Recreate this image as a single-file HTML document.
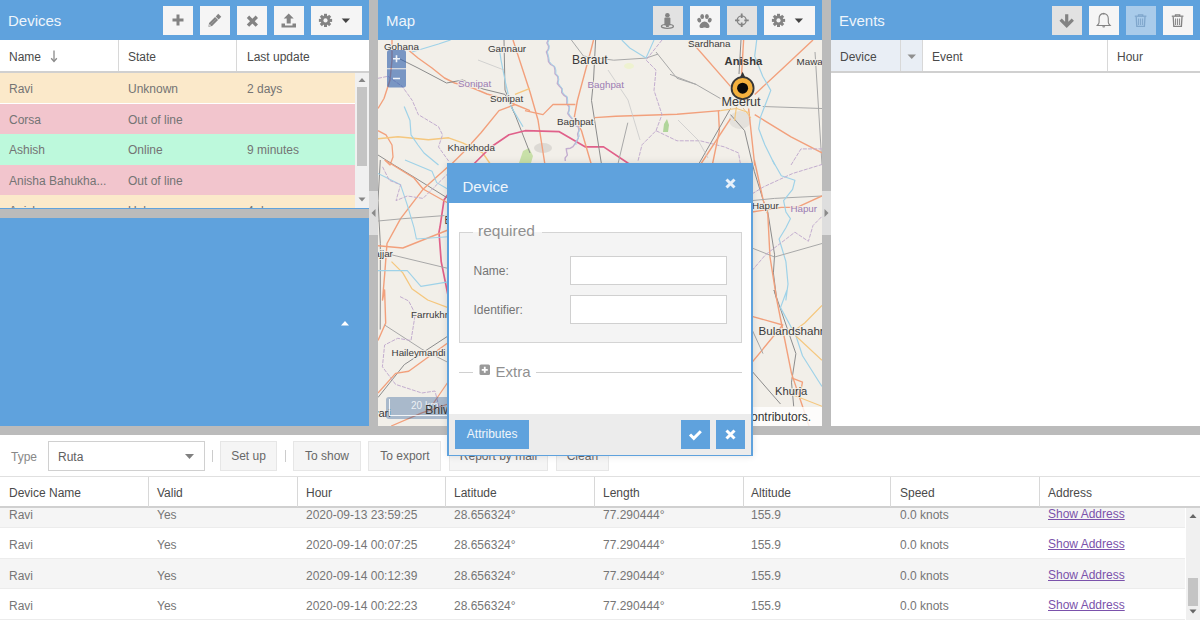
<!DOCTYPE html>
<html><head><meta charset="utf-8">
<style>
*{box-sizing:border-box;margin:0;padding:0}
html,body{width:1200px;height:620px;overflow:hidden;background:#bbbbbb;font-family:"Liberation Sans",sans-serif;}
.a{position:absolute}
.hdr{background:#5fa2dd;color:#eef5fb;font-size:15px}
.btn{position:absolute;top:6px;width:29.6px;height:29px;background:#f5f5f5}
.btn svg{position:absolute;left:0;top:0}
.prs{background:#e2e2e2}
.gh{position:absolute;background:#fff;color:#4a4a4a;font-size:12px}
.gh span{position:absolute;top:10.4px}
.row{position:absolute;left:0;font-size:12px;color:#747474}
.row span{position:absolute}
.vl{position:absolute;width:1px;background:#d8d8d8}
.tb{position:absolute;top:441px;height:29.5px;background:#f5f5f5;border:1px solid #e6e6e6;font-size:12px;color:#686868;text-align:center;line-height:29px}
.br{position:absolute;left:0;width:1186px;font-size:12px;color:#767676}
.br span{position:absolute;top:0}
</style></head><body>

<!-- DEVICES PANEL -->
<div class="a" style="left:0;top:0;width:369px;height:426px;background:#5fa2dd"></div>
<div class="a hdr" style="left:0;top:0;width:369px;height:40px">
  <div class="a" style="left:8px;top:11.7px">Devices</div>
  <div class="btn" style="left:163px"><svg width="30" height="29"><path d="M15 13.5v11M9.5 19h11" stroke="#838383" stroke-width="3" fill="none" transform="translate(0,-5)"/></svg></div>
  <div class="btn" style="left:200px"><svg width="30" height="29"><g transform="translate(14.3,14.8) rotate(-45)" fill="#838383"><path d="M-8.3 0L-5.3-2.1H3.2V2.1H-5.3Z"/><rect x="4.1" y="-2.1" width="3.6" height="4.2"/><path d="M-7.4 0L-5.6-.9V.9Z" fill="#f5f5f5"/><path d="M-4.5 0H3" stroke="#a8a8a8" stroke-width=".6"/></g></svg></div>
  <div class="btn" style="left:237px"><svg width="30" height="29"><path d="M11 10.8l8.8 8.8M19.8 10.8l-8.8 8.8" stroke="#838383" stroke-width="3.4" fill="none"/></svg></div>
  <div class="btn" style="left:274px"><svg width="30" height="29"><path d="M14.7 7.5l-5 5h3v5h4v-5h3z M7.5 17.5h3.5v2h7.5v-2h3.5v4h-14.5z" fill="#838383"/></svg></div>
  <div class="btn" style="left:311px;width:50.5px"><svg width="51" height="29"><g transform="translate(14.5,14.4)" fill="#838383"><circle r="4.8"/><rect x="-1.5" y="-6.6" width="3" height="13.2"/><rect x="-1.5" y="-6.6" width="3" height="13.2" transform="rotate(45)"/><rect x="-1.5" y="-6.6" width="3" height="13.2" transform="rotate(90)"/><rect x="-1.5" y="-6.6" width="3" height="13.2" transform="rotate(135)"/><circle r="2.1" fill="#f5f5f5"/></g><path d="M30.7 12.4h8.3l-4.15 4.6z" fill="#444"/></svg></div>
</div>
<div class="gh" style="left:0;top:40px;width:369px;height:33px;border-bottom:2px solid #d0d0d0">
  <span style="left:9px">Name</span><svg class="a" style="left:49px;top:9px" width="10" height="14"><path d="M5 1.5v10.5" stroke="#8a8a8a" stroke-width="1.3"/><path d="M2.2 9.3L5 12.5 7.8 9.3" stroke="#8a8a8a" stroke-width="1.3" fill="none"/></svg>
  <span style="left:128px">State</span>
  <span style="left:247px">Last update</span>
</div>
<div class="vl" style="left:118px;top:40px;height:31px"></div>
<div class="vl" style="left:236px;top:40px;height:31px"></div>
<div class="a" style="left:0;top:73px;width:355px;height:135px;overflow:hidden;background:#fff">
  <div class="row" style="top:0;width:355px;height:30px;background:#fbe9ca"><span style="left:9px;top:9.4px">Ravi</span><span style="left:128px;top:9.4px">Unknown</span><span style="left:247px;top:9.4px">2 days</span></div>
  <div class="row" style="top:31px;width:355px;height:30px;background:#f2c5cd"><span style="left:9px;top:9.4px">Corsa</span><span style="left:128px;top:9.4px">Out of line</span></div>
  <div class="row" style="top:61px;width:355px;height:31px;background:#bdf9dc"><span style="left:9px;top:9.4px">Ashish</span><span style="left:128px;top:9.4px">Online</span><span style="left:247px;top:9.4px">9 minutes</span></div>
  <div class="row" style="top:92px;width:355px;height:30px;background:#f2c5cd"><span style="left:9px;top:9.4px">Anisha Bahukha...</span><span style="left:128px;top:9.4px">Out of line</span></div>
  <div class="row" style="top:122px;width:355px;height:30px;background:#fbe9ca"><span style="left:9px;top:9.4px">Anish</span><span style="left:128px;top:9.4px">Unknown</span><span style="left:247px;top:9.4px">4 days</span></div>
</div>
<div class="a" style="left:355px;top:73px;width:14px;height:135px;background:#f0f0f0"></div>
<div class="a" style="left:357px;top:87px;width:10px;height:79px;background:#c4c4c4"></div>
<svg class="a" style="left:355px;top:73px" width="14" height="135"><path d="M3.5 9h7l-3.5-4z M3.5 124.5h7l-3.5 4z" fill="#858585"/></svg>
<div class="a" style="left:0;top:208.5px;width:369px;height:9px;background:#bbbbbb"></div>
<svg class="a" style="left:338px;top:318px" width="14" height="10"><path d="M3 7.5h8l-4-4.5z" fill="#fff"/></svg>

<!-- splitters tools -->
<div class="a" style="left:369px;top:191px;width:9px;height:44px;background:#dedede"></div>
<div class="a" style="left:822px;top:191px;width:9px;height:44px;background:#dedede"></div>
<svg class="a" style="left:369px;top:205px" width="9" height="16"><path d="M6.5 4v8l-4-4z" fill="#8a8a8a"/></svg>
<svg class="a" style="left:822px;top:205px" width="9" height="16"><path d="M2.5 4v8l4-4z" fill="#8a8a8a"/></svg>

<!-- MAP PANEL -->
<div class="a" id="map" style="left:378px;top:40px;width:444px;height:386px;background:#f2efe9;overflow:hidden"><svg width="444" height="386" style="position:absolute;left:0;top:0"><ellipse cx="362" cy="80" rx="11" ry="9" fill="#e4e1dc"/>
<ellipse cx="165" cy="108" rx="9" ry="5" fill="#dcd9d4"/>
<path d="M141 123l4-12 6-3 4 8-2 7z" fill="#c8e0a8"/>
<path d="M285 92l1-8 3-5 2 6-1 7z" fill="#b0d59a"/>
<ellipse cx="251" cy="26" rx="5" ry="3" fill="#eef2d0"/>
<path d="M28 8 L40 18 L54 28 L66.5 38 L76.6 43 L94.8 48 L109 54 L125 58.5 L137 64.5 L152 70.6" stroke="#f2a07c" stroke-width="1.4" fill="none" stroke-linejoin="round"/>
<path d="M20 18 L40 28 L68.5 43 L84.7 40 L105 49 L127 54.4 L137 74.6 L152 113" stroke="#8c8c8c" stroke-width="1.0" fill="none" stroke-linejoin="round"/>
<path d="M126 0 L127 50 L137 74.6" stroke="#8c8c8c" stroke-width="1.0" fill="none" stroke-linejoin="round"/>
<path d="M135 0 L152 52 L160 80 L167 125" stroke="#f2a07c" stroke-width="1.4" fill="none" stroke-linejoin="round"/>
<path d="M137 64.5 L121 70.6 L103 92.7 L84.7 113 L72.6 125" stroke="#f2a07c" stroke-width="1.4" fill="none" stroke-linejoin="round"/>
<path d="M14 0 L14 20 L12 40 L6 58.5 L0 68.5" stroke="#f2a07c" stroke-width="1.4" fill="none" stroke-linejoin="round"/>
<path d="M0 90.7 L8 94.8 L14 105 L15 117 L12 125 L6.8 120" stroke="#f2a07c" stroke-width="1.3" fill="none" stroke-linejoin="round"/>
<path d="M0 98.8 L20 96.8 L50.4 99.8 L70.6 97.8 L84.7 102.8 L104.8 113 L113 125" stroke="#f5c77e" stroke-width="1.4" fill="none" stroke-linejoin="round"/>
<path d="M137 54.4 L152 48.4" stroke="#f5c77e" stroke-width="1.2" fill="none" stroke-linejoin="round"/>
<path d="M70 255.4 L63.2 221.6 L61 192.2 L62 187 L66 160 L80 140 L96.8 123 L113 107 L131 94.8 L147 90.7 L181.3 91.7 L207.5 106.9 L225.6 106.9 L249.8 123 L262 130" stroke="#e0608a" stroke-width="1.7" fill="none" stroke-linejoin="round"/>
<path d="M26.2 66.5 L32 80.6 L33 94.8 L40 105 L46 113 L60.5 125" stroke="#9fd2e8" stroke-width="1.2" fill="none" stroke-linejoin="round"/>
<path d="M121 6 L123 20 L128 45 L133 66.5 L145 86.7" stroke="#9fd2e8" stroke-width="1.2" fill="none" stroke-linejoin="round"/>
<path d="M34 12 L60.5 4 L72.6 0" stroke="#9fd2e8" stroke-width="1.2" fill="none" stroke-linejoin="round"/>
<path d="M0 38.3 L10 36.3 L24.2 46.4 L34.3 60.5 L40.3 74.6 L60.5 86.7 L64.5 94.8 L60.5 106.9 L70.6 121" stroke="#c3adcf" stroke-width="1.0" stroke-dasharray="4 1.2" fill="none" stroke-linejoin="round"/>
<path d="M0 115 L16 125 L33.9 135.8 L70 158.4" stroke="#8c8c8c" stroke-width="1.0" fill="none" stroke-linejoin="round"/>
<path d="M170.2 0.0 L168.9 3.0 L170.6 6.1 L170.4 9.1 L168.4 12.0 L169.5 15.1 L170.1 17.5 L170.5 21.6 L172.7 24.5 L176.2 26.5 L177.0 30.2 L177.0 33.7 L179.7 36.5 L180.1 39.8 L179.3 43.5 L181.5 46.3 L183.8 48.7 L183.7 52.5 L185.7 55.1 L188.7 57.1 L188.9 60.5 L188.8 63.8 L191.1 66.8 L190.9 70.1 L189.8 73.5 L191.8 76.3 L194.1 78.9 L194.6 82.8 L197.2 85.2 L200.4 87.2 L200.9 90.6 L199.6 94.0 L200.4 98.0 L198.6 101.3 L196.9 103.8 L195.0 106.7 L192.4 108.2 L188.2 108.7 L188.7 111.9 L189.4 115.1 L187.1 117.9 L187.3 121" stroke="#c3adcf" stroke-width="1.4" fill="none" stroke-linejoin="round"/>
<path d="M171.0 0.0 L169.9 2.9 L171.3 6.0 L171.0 9.0 L169.4 11.9 L170.2 15.0 L170.8 17.5 L171.4 21.4 L173.6 24.3 L176.8 26.5 L177.9 30.0 L177.9 33.4 L180.3 36.2 L180.8 39.5 L180.2 43.0 L182.2 45.9 L184.3 48.4 L184.5 52.0 L186.5 54.6 L189.3 56.7 L189.7 60.0 L189.6 63.3 L191.6 66.3 L191.5 69.6 L190.6 72.9 L192.3 75.8 L194.6 78.4 L195.3 82.1 L197.8 84.5 L200.8 86.6 L201.6 89.9 L200.5 92.8 L201.3 96.2 L199.7 99.0 L197.9 101.7 L198 105" stroke="#9fd2e8" stroke-width="0.9" fill="none" stroke-linejoin="round"/>
<path d="M215.5 0 L213.5 8 L207.5 30.2 L199.4 60.5 L196.4 76.6 L203.5 90.7 L213.5 125" stroke="#f2a07c" stroke-width="1.4" fill="none" stroke-linejoin="round"/>
<path d="M217.6 0 L215.5 40.3 L213.5 60.5 L223.6 125" stroke="#8c8c8c" stroke-width="1.0" fill="none" stroke-linejoin="round"/>
<path d="M216.6 77.6 L237.7 76.2 L299 74.2 L342.4 70.6" stroke="#f2a07c" stroke-width="1.4" fill="none" stroke-linejoin="round"/>
<path d="M147 70.6 L165 74.6 L175 64.5 L197.4 64.5" stroke="#f2a07c" stroke-width="1.3" fill="none" stroke-linejoin="round"/>
<path d="M193.4 0 L205.5 16.1 L235.7 20.2 L268 18.1 L280 14.1" stroke="#a8a8a8" stroke-width="1.0" fill="none" stroke-linejoin="round"/>
<path d="M243.8 0 L251.8 8 L268 18 L276 0" stroke="#9fd2e8" stroke-width="1.1" fill="none" stroke-linejoin="round"/>
<path d="M284 0 L268 20 L278 30 L276 50.4 L284 74.6 L278 90.7 L264 104.8 L260 121" stroke="#c3adcf" stroke-width="1.0" stroke-dasharray="4 1.2" fill="none" stroke-linejoin="round"/>
<path d="M278 90.7 L299 100.8 L322.2 100.8 L346.4 106.9 L360.5 112.9 L362.6 125" stroke="#c3adcf" stroke-width="1.0" stroke-dasharray="4 1.2" fill="none" stroke-linejoin="round"/>
<path d="M278 12 L299 38.3 L318 44.4 L342.4 58.5" stroke="#a8a8a8" stroke-width="1.0" fill="none" stroke-linejoin="round"/>
<path d="M249.8 82.7 L239.7 125" stroke="#a8a8a8" stroke-width="1.0" fill="none" stroke-linejoin="round"/>
<path d="M292 34.3 L318 44.4" stroke="#a8a8a8" stroke-width="1.0" fill="none" stroke-linejoin="round"/>
<path d="M312 0 L352.5 46.4" stroke="#f2a07c" stroke-width="1.4" fill="none" stroke-linejoin="round"/>
<path d="M365.6 0 L363.6 34.3" stroke="#f2a07c" stroke-width="1.4" fill="none" stroke-linejoin="round"/>
<path d="M363 0 L361 34" stroke="#8c8c8c" stroke-width="1.0" fill="none" stroke-linejoin="round"/>
<path d="M435 0 L403 30 L376.7 54.4" stroke="#f2a07c" stroke-width="1.4" fill="none" stroke-linejoin="round"/>
<path d="M384.7 66.5 L444 68.5" stroke="#a8a8a8" stroke-width="1.0" fill="none" stroke-linejoin="round"/>
<path d="M437 12 L440 60 L444 125" stroke="#a8a8a8" stroke-width="1.0" fill="none" stroke-linejoin="round"/>
<path d="M340.4 70.6 L341.4 90.7 L334.3 125" stroke="#f2a07c" stroke-width="1.4" fill="none" stroke-linejoin="round"/>
<path d="M352.5 78.6 L322.2 125" stroke="#f2a07c" stroke-width="1.4" fill="none" stroke-linejoin="round"/>
<path d="M352.5 68.5 L320.2 125" stroke="#8c8c8c" stroke-width="1.0" fill="none" stroke-linejoin="round"/>
<path d="M352.5 74.6 L366.6 90.7 L374.7 125 L376.3 131.3 L385.3 160.6 L389.8 172 L396.6 214.8 L395.4 232.9 L398.8 260 L396 250 L417.9 313.6 L413.5 342.2 L415.7 366.3" stroke="#8c8c8c" stroke-width="1.0" fill="none" stroke-linejoin="round"/>
<path d="M370.6 68.5 L376.7 125 L376.3 120 L385.3 160.6 L389.8 174.2 L392 217 L398.8 260 L404.7 289.5 L413.5 333.4 L424.5 366.3 L431 386" stroke="#f2a07c" stroke-width="1.4" fill="none" stroke-linejoin="round"/>
<path d="M376.7 74.6 L413 96.8 L444 112.9" stroke="#f2a07c" stroke-width="1.4" fill="none" stroke-linejoin="round"/>
<path d="M378.7 0 L376.7 16.1 L384.7 36.3 L392.8 50.4 L382.7 76.6 L380.7 88.7 L386.8 104.8 L396.8 125" stroke="#9fd2e8" stroke-width="1.2" fill="none" stroke-linejoin="round"/>
<path d="M413 125 L423 108.9 L444 108.9" stroke="#c3adcf" stroke-width="1.0" stroke-dasharray="4 1.2" fill="none" stroke-linejoin="round"/>
<path d="M342.4 70.6 L358.5 68.5 L372 73" stroke="#f5c77e" stroke-width="1.2" fill="none" stroke-linejoin="round"/>
<path d="M358.5 66.5 L356.5 80.6" stroke="#f5c77e" stroke-width="1.2" fill="none" stroke-linejoin="round"/>
<path d="M365 68 L373 78" stroke="#f5c77e" stroke-width="1.0" fill="none" stroke-linejoin="round"/>
<path d="M230 30 L250 60 L262 100" stroke="#c9c9c9" stroke-width="0.8" fill="none" stroke-linejoin="round"/>
<path d="M100 20 L126 30" stroke="#c9c9c9" stroke-width="0.8" fill="none" stroke-linejoin="round"/>
<path d="M300 80 L320 100 L330 118" stroke="#c9c9c9" stroke-width="0.8" fill="none" stroke-linejoin="round"/>
<path d="M6.8 120 L36 138 L45 149 L70 163" stroke="#f2a07c" stroke-width="1.4" fill="none" stroke-linejoin="round"/>
<path d="M70 126.8 L45 149.3 L22.6 178.7 L9 203.5 L6.8 232.9 L4.5 260 L6.6 250 L7.7 283 L0 300.5" stroke="#f2a07c" stroke-width="1.4" fill="none" stroke-linejoin="round"/>
<path d="M2.3 120 L0 160.6 L2.3 203.5 L2.3 260 L2.2 289.5" stroke="#8c8c8c" stroke-width="1.0" fill="none" stroke-linejoin="round"/>
<path d="M0 181 L24.8 178.7 L70 175.3" stroke="#a8a8a8" stroke-width="1.0" fill="none" stroke-linejoin="round"/>
<path d="M13.5 214.8 L70 228.4" stroke="#a8a8a8" stroke-width="1.0" fill="none" stroke-linejoin="round"/>
<path d="M0 205.8 L24.8 208 L70 190" stroke="#f2a07c" stroke-width="1.4" fill="none" stroke-linejoin="round"/>
<path d="M13.5 221.6 L24.8 232.9 L33.9 248.7 L49.7 260 L70 267.6" stroke="#f5c77e" stroke-width="1.3" fill="none" stroke-linejoin="round"/>
<path d="M0 133.5 L22.6 144.8 L29.3 165 L36 187.7 L38.4 199 L70 196.7" stroke="#9fd2e8" stroke-width="1.1" fill="none" stroke-linejoin="round"/>
<path d="M0 230.6 L29.3 230.6 L42.9 246.4 L70 241.9" stroke="#9fd2e8" stroke-width="1.1" fill="none" stroke-linejoin="round"/>
<path d="M27 120 L54 131.3 L58.7 142.6 L70 149.3" stroke="#9fd2e8" stroke-width="1.1" fill="none" stroke-linejoin="round"/>
<path d="M4.5 126.8 L11.3 140.3 L22.6 144.8 L18 160.6 L29.3 156 L45 158.4 L70 133.5" stroke="#c3adcf" stroke-width="1.0" stroke-dasharray="4 1.2" fill="none" stroke-linejoin="round"/>
<path d="M0 357.5 L26.3 324.6 L70 296" stroke="#8c8c8c" stroke-width="1.0" fill="none" stroke-linejoin="round"/>
<path d="M0 353 L17.6 333.4 L30.7 331.2 L70 302.7" stroke="#f2a07c" stroke-width="1.4" fill="none" stroke-linejoin="round"/>
<path d="M6.6 285 L43.9 309.2 L70 322.4" stroke="#a8a8a8" stroke-width="1.0" fill="none" stroke-linejoin="round"/>
<path d="M13.2 386 L43.9 372.9 L70 364" stroke="#f2a07c" stroke-width="1.3" fill="none" stroke-linejoin="round"/>
<path d="M70 342 L54.9 364" stroke="#f2a07c" stroke-width="1.3" fill="none" stroke-linejoin="round"/>
<path d="M22 256.6 L30.7 261 L37.3 274 L33 300.5 L19.7 298.3 L6.6 305 L4.4 326.8 L17.6 344.4 L43.9 353 L57 351 L61.4 368.5" stroke="#c3adcf" stroke-width="1.0" stroke-dasharray="4 1.2" fill="none" stroke-linejoin="round"/>
<path d="M374 160.6 L396.6 158.4 L444 156" stroke="#a8a8a8" stroke-width="1.0" fill="none" stroke-linejoin="round"/>
<path d="M374 172 L403.3 167.4 L419 167.4 L444 156" stroke="#f2a07c" stroke-width="1.4" fill="none" stroke-linejoin="round"/>
<path d="M394.3 120 L403.3 135.8 L416.9 140.3 L414.6 149.3 L405.6 160.6 L407.9 172 L412.4 178.7 L407.9 187.7 L401.1 199 L407.9 221.6 L410 244 L407.9 260 L409 250 L402.5 267.6 L418 296 L424.5 315.8 L439.8 340 L444 346.5" stroke="#9fd2e8" stroke-width="1.2" fill="none" stroke-linejoin="round"/>
<path d="M374 208 L396.6 217 L444 203.5" stroke="#a8a8a8" stroke-width="1.0" fill="none" stroke-linejoin="round"/>
<path d="M374 153.9 L385.3 147 L414.6 133.5 L444 124.5" stroke="#c3adcf" stroke-width="1.0" stroke-dasharray="4 1.2" fill="none" stroke-linejoin="round"/>
<path d="M374 230.6 L387.5 214.8 L416.9 192.2 L430.4 201.3 L435 185.5 L444 176.4" stroke="#c3adcf" stroke-width="1.0" stroke-dasharray="4 1.2" fill="none" stroke-linejoin="round"/>
<path d="M374 276.3 L404.7 285 L374 322.4" stroke="#f2a07c" stroke-width="1.4" fill="none" stroke-linejoin="round"/>
<path d="M413.5 337.8 L424.5 342.2 L422.3 353" stroke="#f2a07c" stroke-width="1.3" fill="none" stroke-linejoin="round"/>
<path d="M444 265.4 L426.7 283 L417.9 289.5" stroke="#f5c77e" stroke-width="1.2" fill="none" stroke-linejoin="round"/>
<path d="M417.9 296 L444 320.2" stroke="#f5c77e" stroke-width="1.2" fill="none" stroke-linejoin="round"/>
<path d="M415.7 355.3 L444 366.3" stroke="#f5c77e" stroke-width="1.2" fill="none" stroke-linejoin="round"/>
<path d="M374 331.2 L402.5 364" stroke="#8c8c8c" stroke-width="1.0" fill="none" stroke-linejoin="round"/>
<path d="M374 289.5 L385 313.6" stroke="#a8a8a8" stroke-width="1.0" fill="none" stroke-linejoin="round"/>
<text x="6" y="10.0" font-size="9.8" fill="#3a3a3a" stroke="#f2efe9" stroke-width="2.2" stroke-opacity=".85" paint-order="stroke" font-family="Liberation Sans">Gohana</text>
<text x="110" y="12.0" font-size="9.8" fill="#3a3a3a" stroke="#f2efe9" stroke-width="2.2" stroke-opacity=".85" paint-order="stroke" font-family="Liberation Sans">Gannaur</text>
<text x="80" y="47.0" font-size="9.8" fill="#9b7bb3" stroke="#f2efe9" stroke-width="2.2" stroke-opacity=".85" paint-order="stroke" font-family="Liberation Sans">Sonipat</text>
<text x="112" y="62.0" font-size="9.8" fill="#3a3a3a" stroke="#f2efe9" stroke-width="2.2" stroke-opacity=".85" paint-order="stroke" font-family="Liberation Sans">Sonipat</text>
<text x="69.5" y="110.5" font-size="9.8" fill="#3a3a3a" stroke="#f2efe9" stroke-width="2.2" stroke-opacity=".85" paint-order="stroke" font-family="Liberation Sans">Kharkhoda</text>
<text x="194" y="24.0" font-size="12.1" fill="#3a3a3a" stroke="#f2efe9" stroke-width="2.2" stroke-opacity=".85" paint-order="stroke" font-family="Liberation Sans">Baraut</text>
<text x="209.5" y="48.3" font-size="9.8" fill="#9b7bb3" stroke="#f2efe9" stroke-width="2.2" stroke-opacity=".85" paint-order="stroke" font-family="Liberation Sans">Baghpat</text>
<text x="179" y="85.2" font-size="9.8" fill="#3a3a3a" stroke="#f2efe9" stroke-width="2.2" stroke-opacity=".85" paint-order="stroke" font-family="Liberation Sans">Baghpat</text>
<text x="310" y="7.1" font-size="9.8" fill="#3a3a3a" stroke="#f2efe9" stroke-width="2.2" stroke-opacity=".85" paint-order="stroke" font-family="Liberation Sans">Sardhana</text>
<text x="418.6" y="24.7" font-size="9.8" fill="#3a3a3a" stroke="#f2efe9" stroke-width="2.2" stroke-opacity=".85" paint-order="stroke" font-family="Liberation Sans">Mawa</text>
<text x="343.4" y="66.0" font-size="12.6" fill="#3a3a3a" stroke="#f2efe9" stroke-width="2.2" stroke-opacity=".85" paint-order="stroke" font-family="Liberation Sans">Meerut</text>
<text x="292" y="129.5" font-size="9.8" fill="#3a3a3a" stroke="#f2efe9" stroke-width="2.2" stroke-opacity=".85" paint-order="stroke" font-family="Liberation Sans">Modinagar</text>
<text x="-14" y="217.2" font-size="9.8" fill="#3a3a3a" stroke="#f2efe9" stroke-width="2.2" stroke-opacity=".85" paint-order="stroke" font-family="Liberation Sans">Jhajjar</text>
<text x="66.6" y="183.5" font-size="10.2" fill="#3a3a3a" stroke="#f2efe9" stroke-width="2.2" stroke-opacity=".85" paint-order="stroke" font-family="Liberation Sans">B</text>
<text x="33" y="277.5" font-size="9.8" fill="#3a3a3a" stroke="#f2efe9" stroke-width="2.2" stroke-opacity=".85" paint-order="stroke" font-family="Liberation Sans">Farrukhnagar</text>
<text x="13.6" y="316.0" font-size="9.8" fill="#3a3a3a" stroke="#f2efe9" stroke-width="2.2" stroke-opacity=".85" paint-order="stroke" font-family="Liberation Sans">Haileymandi</text>
<text x="-22" y="377.0" font-size="11.2" fill="#3a3a3a" stroke="#f2efe9" stroke-width="2.2" stroke-opacity=".85" paint-order="stroke" font-family="Liberation Sans">Rewari</text>
<text x="374" y="168.5" font-size="9.8" fill="#3a3a3a" stroke="#f2efe9" stroke-width="2.2" stroke-opacity=".85" paint-order="stroke" font-family="Liberation Sans">Hapur</text>
<text x="412.4" y="172.0" font-size="9.8" fill="#9b7bb3" stroke="#f2efe9" stroke-width="2.2" stroke-opacity=".85" paint-order="stroke" font-family="Liberation Sans">Hapur</text>
<text x="380.6" y="294.8" font-size="11.6" fill="#3a3a3a" stroke="#f2efe9" stroke-width="2.2" stroke-opacity=".85" paint-order="stroke" font-family="Liberation Sans">Bulandshahr</text>
<text x="397" y="355.0" font-size="11.2" fill="#3a3a3a" stroke="#f2efe9" stroke-width="2.2" stroke-opacity=".85" paint-order="stroke" font-family="Liberation Sans">Khurja</text></svg>
<svg class="a" style="left:9px;top:10px" width="19" height="38"><path d="M0 18.2V2.5A2.5 2.5 0 0 1 2.5 0h14A2.5 2.5 0 0 1 19 2.5v15.7z" fill="rgba(40,90,170,.6)"/><path d="M0 19.2h19v15.8a2.5 2.5 0 0 1-2.5 2.5h-14A2.5 2.5 0 0 1 0 35z" fill="rgba(40,90,170,.6)"/><path d="M9.5 5.2v7M6 8.7h7M6 28.5h7" stroke="#fff" stroke-width="1.6" opacity=".9"/></svg>
<div class="a" style="left:7.7px;top:357px;width:66px;height:22px;background:rgba(0,60,136,.3);border-radius:3px"></div><div class="a" style="left:10.5px;top:359px;width:60px;height:17px;border:1px solid rgba(255,255,255,.85);border-top:none;border-right:none"></div><div class="a" style="left:33px;top:360px;font-size:10px;color:rgba(255,255,255,.8)">20 km</div><div class="a" style="left:47px;top:363px;font-size:12.5px;color:#3a3a3a">Bhiwadi</div>
<div class="a" style="left:364px;top:366.8px;width:80px;height:19.2px;background:rgba(255,255,255,.8)"></div>
<div class="a" style="left:367px;top:370px;font-size:12px;color:#333">contributors.</div>

<div class="a" style="left:346.5px;top:15px;font-size:11.2px;font-weight:bold;color:#383838;letter-spacing:.1px">Anisha</div>
<svg class="a" style="left:350px;top:30px" width="30" height="32"><path d="M14.6 1.8l2.6 5.5h-5.2z" fill="#333"/><circle cx="14.6" cy="18.2" r="11" fill="#f4b13e" stroke="#383838" stroke-width="1.8"/><circle cx="14.6" cy="18.2" r="5.5" fill="#0a0a0a"/></svg>
</div>
<div class="a hdr" style="left:378px;top:0;width:444px;height:40px">
  <div class="a" style="left:8px;top:11.7px">Map</div>
  <div class="btn prs" style="left:275px"><svg width="30" height="29"><circle cx="14.4" cy="9.2" r="2.3" fill="#838383"/><rect x="11.4" y="11.6" width="6" height="8" rx="1" fill="#838383"/><ellipse cx="14.4" cy="20.3" rx="6" ry="2" fill="none" stroke="#838383" stroke-width="1.3"/><rect x="13" y="18" width="2.8" height="3" fill="#838383"/></svg></div>
  <div class="btn" style="left:312px"><svg width="30" height="29"><g fill="#838383"><ellipse cx="9.2" cy="14.2" rx="1.9" ry="2.4" transform="rotate(-20 9.2 14.2)"/><ellipse cx="12.2" cy="10.4" rx="1.9" ry="2.5"/><ellipse cx="16.9" cy="10.4" rx="1.9" ry="2.5"/><ellipse cx="19.8" cy="14.2" rx="1.9" ry="2.4" transform="rotate(20 19.8 14.2)"/><path d="M14.5 15.5c-2.5 0-5 3-5 4.8 0 1.5 1.2 1.8 2.2 1.8 1.2 0 1.8-.6 2.8-.6s1.6.6 2.8.6c1 0 2.2-.3 2.2-1.8 0-1.8-2.5-4.8-5-4.8z"/></g></svg></div>
  <div class="btn prs" style="left:349px"><svg width="30" height="29"><g stroke="#838383" fill="none"><circle cx="14.7" cy="14.3" r="4.5" stroke-width="1.3"/><path d="M14.7 7.6v4.4M14.7 16.6v4.4M8 14.3h4.4M17.3 14.3h4.4" stroke-width="1.8"/></g></svg></div>
  <div class="btn" style="left:386px;width:50.5px"><svg width="51" height="29"><g transform="translate(14.5,14.4)" fill="#838383"><circle r="4.8"/><rect x="-1.5" y="-6.6" width="3" height="13.2"/><rect x="-1.5" y="-6.6" width="3" height="13.2" transform="rotate(45)"/><rect x="-1.5" y="-6.6" width="3" height="13.2" transform="rotate(90)"/><rect x="-1.5" y="-6.6" width="3" height="13.2" transform="rotate(135)"/><circle r="2.1" fill="#f5f5f5"/></g><path d="M30.7 12.4h8.3l-4.15 4.6z" fill="#444"/></svg></div>
</div>

<!-- EVENTS PANEL -->
<div class="a hdr" style="left:831px;top:0;width:369px;height:40px">
  <div class="a" style="left:8px;top:11.7px">Events</div>
  <div class="btn prs" style="left:221.3px"><svg width="30" height="29"><path d="M14.7 8.3v10.5M8.6 13.6l6.1 6.1 6.1-6.1" stroke="#838383" stroke-width="3.2" fill="none"/></svg></div>
  <div class="btn" style="left:258.3px"><svg width="30" height="29"><path d="M14.7 7.6c-3 0-4.6 2.4-4.6 5.2v3.5c0 1.4-1 2.4-1.8 3.2h12.8c-.8-.8-1.8-1.8-1.8-3.2v-3.5c0-2.8-1.6-5.2-4.6-5.2z" fill="none" stroke="#838383" stroke-width="1.1"/><path d="M13.2 20.2a1.5 1.3 0 0 0 3 0z" fill="#838383"/><circle cx="14.7" cy="7.6" r=".9" fill="#838383"/></svg></div>
  <div class="btn" style="left:295.3px;background:#a9cbea"><svg width="30" height="29"><g fill="none" stroke="#7fa6cc" stroke-width="1.3"><path d="M8.8 10.2h11.6"/><path d="M12.5 10v-1.2h4.2v1.2"/><path d="M10.2 10.8l.6 9.6h7.6l.6-9.6"/><path d="M12.6 12.5v6.5M14.6 12.5v6.5M16.6 12.5v6.5" stroke-width="1"/></g></svg></div>
  <div class="btn" style="left:332px"><svg width="30" height="29"><g fill="none" stroke="#838383" stroke-width="1.3"><path d="M8.8 10.2h11.6"/><path d="M12.5 10v-1.2h4.2v1.2"/><path d="M10.2 10.8l.6 9.6h7.6l.6-9.6"/><path d="M12.6 12.5v6.5M14.6 12.5v6.5M16.6 12.5v6.5" stroke-width="1"/></g></svg></div>
</div>
<div class="a" style="left:831px;top:40px;width:369px;height:386px;background:#fff"></div>
<div class="gh" style="left:831px;top:40px;width:369px;height:33px;border-bottom:2px solid #d0d0d0">
  <div class="a" style="left:0;top:0;width:91px;height:31px;background:#e9eef5"></div>
  <span style="left:9px">Device</span>
  <span style="left:101px">Event</span>
  <span style="left:286px">Hour</span><svg class="a" style="left:76px;top:14px" width="10" height="6"><path d="M0.5 0.5h8.5l-4.25 4.5z" fill="#8f8f8f"/></svg>
</div>
<div class="vl" style="left:900px;top:40px;height:31px"></div>
<div class="vl" style="left:922px;top:40px;height:31px"></div>
<div class="vl" style="left:1107px;top:40px;height:31px"></div>

<!-- BOTTOM PANEL -->
<div class="a" style="left:0;top:435px;width:1200px;height:185px;background:#fff"></div>
<div class="a" style="left:11px;top:450px;font-size:12px;color:#888">Type</div>
<div class="a" style="left:48px;top:441px;width:156.5px;height:29.5px;border:1px solid #d0d0d0;background:#fff;font-size:12px;color:#606060"><span class="a" style="left:9px;top:8px">Ruta</span><svg class="a" style="left:135.5px;top:12px" width="10" height="6"><path d="M0 0h9l-4.5 5z" fill="#808080"/></svg></div>
<div class="a" style="left:212px;top:450px;width:1px;height:12px;background:#ccc"></div>
<div class="tb" style="left:220px;width:57px">Set up</div>
<div class="a" style="left:285px;top:450px;width:1px;height:12px;background:#ccc"></div>
<div class="tb" style="left:293.3px;width:67.4px">To show</div>
<div class="tb" style="left:368.4px;width:73px">To export</div>
<div class="tb" style="left:449.4px;width:98.3px">Report by mail</div>
<div class="tb" style="left:556.2px;width:52.4px">Clean</div>

<div class="gh" style="left:0;top:476px;width:1200px;height:32px;border-top:1px solid #e0e0e0;border-bottom:2px solid #d0d0d0">
  <span style="left:9px;top:9px">Device Name</span>
  <span style="left:157px;top:9px">Valid</span>
  <span style="left:306px;top:9px">Hour</span>
  <span style="left:454px;top:9px">Latitude</span>
  <span style="left:603px;top:9px">Length</span>
  <span style="left:751px;top:9px">Altitude</span>
  <span style="left:900px;top:9px">Speed</span>
  <span style="left:1048px;top:9px">Address</span>
</div>
<div class="vl" style="left:148px;top:477px;height:30px"></div>
<div class="vl" style="left:296.5px;top:477px;height:30px"></div>
<div class="vl" style="left:445px;top:477px;height:30px"></div>
<div class="vl" style="left:593.6px;top:477px;height:30px"></div>
<div class="vl" style="left:742.5px;top:477px;height:30px"></div>
<div class="vl" style="left:890px;top:477px;height:30px"></div>
<div class="vl" style="left:1038.6px;top:477px;height:30px"></div>

<div class="a" style="left:0;top:508px;width:1185px;height:112px;overflow:hidden">
  <div class="br" style="top:-10.5px;height:30.5px;background:#f5f5f5;border-bottom:1px solid #ececec"><span style="left:9px;top:10px">Ravi</span><span style="left:157px;top:10px">Yes</span><span style="left:306px;top:10px">2020-09-13 23:59:25</span><span style="left:454px;top:10px">28.656324°</span><span style="left:603px;top:10px">77.290444°</span><span style="left:751px;top:10px">155.9</span><span style="left:900px;top:10px">0.0 knots</span><span style="left:1048px;top:9px;color:#7b52ab;text-decoration:underline">Show Address</span></div>
  <div class="br" style="top:20px;height:30.5px;background:#fff;border-bottom:1px solid #ececec"><span style="left:9px;top:10px">Ravi</span><span style="left:157px;top:10px">Yes</span><span style="left:306px;top:10px">2020-09-14 00:07:25</span><span style="left:454px;top:10px">28.656324°</span><span style="left:603px;top:10px">77.290444°</span><span style="left:751px;top:10px">155.9</span><span style="left:900px;top:10px">0.0 knots</span><span style="left:1048px;top:9px;color:#7b52ab;text-decoration:underline">Show Address</span></div>
  <div class="br" style="top:50.5px;height:30.5px;background:#f5f5f5;border-bottom:1px solid #ececec"><span style="left:9px;top:10px">Ravi</span><span style="left:157px;top:10px">Yes</span><span style="left:306px;top:10px">2020-09-14 00:12:39</span><span style="left:454px;top:10px">28.656324°</span><span style="left:603px;top:10px">77.290444°</span><span style="left:751px;top:10px">155.9</span><span style="left:900px;top:10px">0.0 knots</span><span style="left:1048px;top:9px;color:#7b52ab;text-decoration:underline">Show Address</span></div>
  <div class="br" style="top:81px;height:30.5px;background:#fff;border-bottom:1px solid #ececec"><span style="left:9px;top:10px">Ravi</span><span style="left:157px;top:10px">Yes</span><span style="left:306px;top:10px">2020-09-14 00:22:23</span><span style="left:454px;top:10px">28.656324°</span><span style="left:603px;top:10px">77.290444°</span><span style="left:751px;top:10px">155.9</span><span style="left:900px;top:10px">0.0 knots</span><span style="left:1048px;top:9px;color:#7b52ab;text-decoration:underline">Show Address</span></div>
</div>
<div class="a" style="left:1186px;top:508px;width:14px;height:112px;background:#f0f0f0"></div><div class="a" style="left:1188px;top:578.4px;width:9.7px;height:27.6px;background:#c4c4c4"></div><svg class="a" style="left:1186px;top:508px" width="14" height="112"><path d="M3.5 10h7l-3.5-4z M3.5 101.5h7l-3.5 4z" fill="#666"/></svg>

<!-- DIALOG -->
<div class="a" style="left:447px;top:162.5px;width:305.5px;height:293.5px;background:#5fa2dd;box-shadow:0 0 7px rgba(0,0,0,.12)"></div>
<div class="a" style="left:462.5px;top:178px;font-size:15px;color:#eef5fb">Device</div>
<svg class="a" style="left:720px;top:173px" width="21" height="21"><path d="M6.5 6.5l8 8M14.5 6.5l-8 8" stroke="#e8f1fa" stroke-width="3" fill="none"/></svg>
<div class="a" style="left:449px;top:203px;width:302px;height:211px;background:#fff"></div>
<div class="a" style="left:449px;top:414px;width:302px;height:40.7px;background:#ececec"></div>
<div class="a" style="left:458.5px;top:232px;width:283.5px;height:111px;border:1px solid #d4d4d4;border-top:none;background:#f4f4f4"></div>
<div class="a" style="left:458.5px;top:232px;width:14px;height:1px;background:#d4d4d4"></div>
<div class="a" style="left:542px;top:232px;width:200px;height:1px;background:#d4d4d4"></div>
<div class="a" style="left:478px;top:222px;font-size:15.5px;color:#909090">required</div>
<div class="a" style="left:473.5px;top:264px;font-size:12px;color:#747474">Name:</div>
<div class="a" style="left:473.5px;top:303px;font-size:12px;color:#747474">Identifier:</div>
<div class="a" style="left:570px;top:255.8px;width:157px;height:29px;border:1px solid #d0d0d0;background:#fff"></div>
<div class="a" style="left:570px;top:294.5px;width:157px;height:29px;border:1px solid #d0d0d0;background:#fff"></div>
<div class="a" style="left:458.5px;top:371.5px;width:283.5px;height:1px;background:#d0d0d0"></div>
<div class="a" style="left:472.5px;top:362px;width:63px;height:20px;background:#fff"></div>
<svg class="a" style="left:479px;top:364px" width="12" height="12"><rect x="0.5" y="0.5" width="10.5" height="10.5" rx="1.5" fill="#9a9a9a"/><path d="M5.75 2.8v6M2.75 5.8h6" stroke="#fff" stroke-width="1.8"/></svg>
<div class="a" style="left:495.5px;top:363px;font-size:15px;color:#909090">Extra</div>
<div class="a" style="left:455.2px;top:420px;width:74px;height:28.8px;background:#5fa2dd;color:#f0f6fb;font-size:12px;text-align:center;line-height:28px">Attributes</div>
<div class="a" style="left:680.8px;top:420px;width:29px;height:28.8px;background:#5fa2dd"><svg width="29" height="29"><path d="M9 14.5l3.8 3.8 7-7" stroke="#fff" stroke-width="3" fill="none"/></svg></div>
<div class="a" style="left:716px;top:420px;width:29px;height:28.8px;background:#5fa2dd"><svg width="29" height="29"><path d="M10.5 10.5l8 8M18.5 10.5l-8 8" stroke="#fff" stroke-width="3" fill="none"/></svg></div>

</body></html>
